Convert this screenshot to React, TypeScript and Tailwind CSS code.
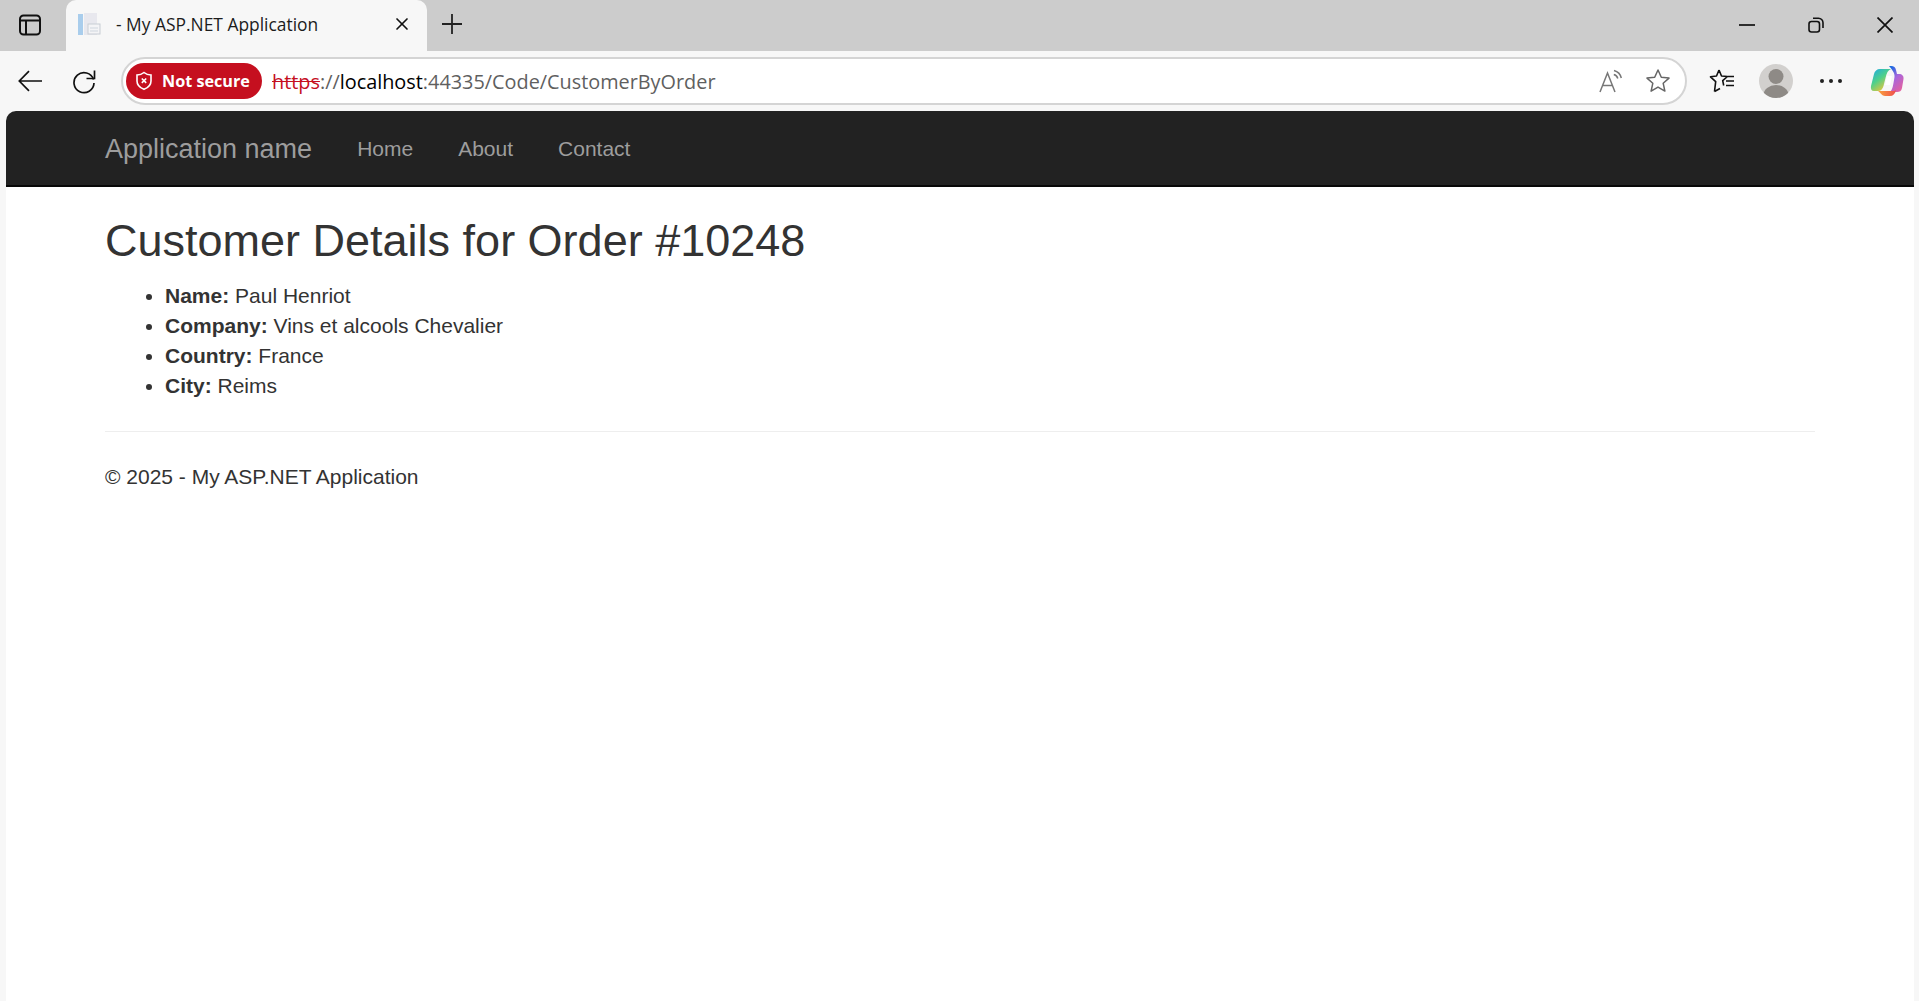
import { X } from 'lucide-react';

const uiFont = "font-['Open_Sans','Noto_Sans',sans-serif]";
const pageFont = "font-['Liberation_Sans',Arial,sans-serif]";

function TabStrip() {
  return (
    <div className="flex h-[51px] items-start bg-[#cccccc]">
      <div className="flex h-[51px] w-[66px] items-center pb-[2px] pl-[19px]">
        <svg width="22" height="22" viewBox="0 0 22 22" fill="none" stroke="#111" strokeWidth="2">
          <rect x="1" y="1.500" width="20" height="19" rx="3.500" />
          <path d="M1 6.500h20M7 6.500v14" />
        </svg>
      </div>
      <div className="flex h-[51px] w-[361px] items-center rounded-t-[10px] bg-[#f7f7f7] pb-[3px] pl-[11px] pr-[15px]">
        <svg width="24" height="24" viewBox="0 0 24 24" className="shrink-0">
          <rect x="1" y="2" width="5" height="21" fill="#a9cdec" />
          <rect x="7" y="1" width="13" height="22" fill="#e8e8ee" />
          <rect x="11" y="12" width="12" height="10" fill="#f4f4f6" stroke="#c8cdd4" />
          <path d="M13 16h8M13 19h8" stroke="#cfd6de" />
        </svg>
        <span className={`ml-[15px] flex-1 text-[17.400px] text-[#1c1c1c] ${uiFont}`}>- My ASP.NET Application</span>
        <X size={20} color="#111" strokeWidth={2} />
      </div>
      <div className="flex h-[51px] w-[50px] items-center justify-center pb-[3px]">
        <svg width="22" height="22" viewBox="0 0 22 22" stroke="#222" strokeWidth="1.800">
          <path d="M11 1v20M1 11h20" />
        </svg>
      </div>
      <div className="flex-1" />
      <div className="flex h-[51px] items-center pb-[2px]">
        <div className="flex w-[69px] justify-center">
          <svg width="16" height="16" viewBox="0 0 16 16" stroke="#111" strokeWidth="1.700">
            <path d="M0 8h16" />
          </svg>
        </div>
        <div className="flex w-[69px] justify-center">
          <svg width="16" height="16" viewBox="0 0 16 16" fill="none" stroke="#111" strokeWidth="1.600">
            <rect x="1" y="4.500" width="10.500" height="10.500" rx="2.500" />
            <path d="M5 1.200h5.500A4.500 4.500 0 0 1 15 5.700V11" />
          </svg>
        </div>
        <div className="flex w-[69px] justify-center">
          <svg width="16" height="16" viewBox="0 0 16 16" stroke="#111" strokeWidth="1.700">
            <path d="M0.500 0.500l15 15M15.500 0.500l-15 15" />
          </svg>
        </div>
      </div>
    </div>
  );
}

function AddressBar() {
  return (
    <div className="flex h-[60px] items-center bg-[#f7f7f7]">
      <div className="flex w-[60px] justify-center">
        <svg width="24" height="22" viewBox="0 0 24 22" fill="none" stroke="#111" strokeWidth="1.700">
          <path d="M24 11H1.500M11 1.200L1.300 11l9.700 9.800" />
        </svg>
      </div>
      <div className="flex w-[48px] justify-center">
        <svg width="26" height="26" viewBox="0 0 26 26" fill="none" stroke="#111" strokeWidth="1.700">
          <path d="M22.500 11.500A10 10 0 1 0 23 15" />
          <path d="M23.500 2.500v8h-8" />
        </svg>
      </div>
      <div className="ml-[13px] flex h-[48px] w-[1566px] items-center rounded-full border-2 border-[#d4d4d4] bg-white pl-[3px] pr-[14px]">
        <div className={`flex h-[36px] w-[136px] items-center rounded-full bg-[#c50f1f] pl-[9px] font-bold text-white ${uiFont}`}>
          <svg width="18" height="20" viewBox="0 0 18 20" fill="none" stroke="#fff" strokeWidth="1.600">
            <path d="M9 1.500c2 1.600 4.400 2.400 7 2.500v6c0 4-3 6.800-7 8.300C5 16.800 2 14 2 10V4c2.600-.1 5-.9 7-2.500z" />
            <path d="M6.800 7.500l4.400 4.400M11.200 7.500l-4.400 4.400" />
          </svg>
          <span className="ml-[9px] text-[16.200px]">Not secure</span>
        </div>
        <div className={`ml-[10px] flex-1 pt-[1px] text-[19.850px] text-[#5f5f5f] ${uiFont}`}>
          <span className="text-[#c50f1f] line-through">https</span>
          <span>://</span>
          <span className="text-black">localhost</span>
          <span>:44335/Code/CustomerByOrder</span>
        </div>
        <svg width="24" height="24" viewBox="0 0 24 24" fill="none" stroke="#777" strokeWidth="1.500" className="mr-[22px]">
          <path d="M1 23L8.500 4 16 23M3.800 16.500h9.400" />
          <path d="M15 1.500c3.800 1 6.400 3.600 7.300 7.500M14.800 5.500c2 .5 3.400 1.900 4 4" />
        </svg>
        <svg width="26" height="26" viewBox="0 0 26 26" fill="none" stroke="#666" strokeWidth="1.500" strokeLinejoin="round">
          <path d="M13 2l3.300 7.300 7.700.8-5.800 5.200 1.700 7.800L13 19.100l-6.900 4 1.700-7.800L2 10.100l7.700-.8z" />
        </svg>
      </div>
      <div className="ml-[17px] flex w-[36px] justify-center">
        <svg width="26" height="26" viewBox="0 0 26 26" fill="none" stroke="#111" strokeWidth="1.600" strokeLinejoin="round">
          <path d="M10 2l2.500 6 6 .5-4.800 4.200 1 4.800M5.500 23.500l1.200-9.800L1.500 8.800 7.500 8 10 2M5.500 23.500l5.500-3" />
          <path d="M19 8.500h6M17 13h8M17 17.500h8" />
        </svg>
      </div>
      <div className="ml-[19px] flex h-[34px] w-[34px] items-end justify-center overflow-hidden rounded-full bg-[#d2d0ce]">
        <svg width="34" height="34" viewBox="0 0 34 34" fill="#8e8a86">
          <circle cx="17" cy="12.500" r="7.500" />
          <ellipse cx="17" cy="31" rx="12.500" ry="10" />
        </svg>
      </div>
      <div className="ml-[21px] flex w-[34px] justify-center gap-[5px]">
        <span className="h-[4px] w-[4px] rounded-full bg-[#222]" />
        <span className="h-[4px] w-[4px] rounded-full bg-[#222]" />
        <span className="h-[4px] w-[4px] rounded-full bg-[#222]" />
      </div>
      <div className="ml-[22px]">
        <svg width="34" height="32" viewBox="0 0 34 32" fill="none">
          <defs>
            <linearGradient id="copA" x1="0" y1="0" x2="0.700" y2="1">
              <stop offset="0" stopColor="#19a8e8" />
              <stop offset="0.5" stopColor="#4fd08a" />
              <stop offset="1" stopColor="#f7c533" />
            </linearGradient>
            <linearGradient id="copB" x1="0.200" y1="0" x2="0.800" y2="1">
              <stop offset="0" stopColor="#1668e0" />
              <stop offset="0.45" stopColor="#a866dd" />
              <stop offset="1" stopColor="#e8609a" />
            </linearGradient>
            <linearGradient id="copC" x1="0" y1="0" x2="1" y2="0">
              <stop offset="0" stopColor="#f9a23c" />
              <stop offset="1" stopColor="#ef4e4e" />
            </linearGradient>
          </defs>
          <path d="M10 4h11c-3 1-4.500 4-5.500 9l-2 8c-.8 3-2.800 5-5.500 5H4c-2.500 0-3.500-2-3-5L4 9c.6-3 3-5 6-5z" fill="url(#copA)" />
          <path d="M19 1h2c3 0 4.500 1.500 5 4l1 4h2c3 0 5 2 4.500 5L32 23c-.6 3-2.500 4-5 4h-8c3-1 3.500-4 4.500-9l1-6c.4-3-1-6-5.500-11z" fill="url(#copB)" />
          <path d="M8 26h11c3 0 5 .5 7-1-1 4-3 6-6 6h-5c-3 0-4-3-7-5z" fill="url(#copC)" />
          <path d="M17 11h5l-2 9h-5z" fill="#fff" />
        </svg>
      </div>
    </div>
  );
}

function Navbar() {
  return (
    <div className={`flex h-[76px] items-center rounded-t-[10px] border-b-2 border-[#080808] bg-[#222222] pl-[99px] pr-[99px] pt-[2px] ${pageFont}`}>
      <span className="text-[27px] text-[#9d9d9d]">Application name</span>
      <div className="ml-[45px] flex gap-[45px] text-[21px] text-[#9d9d9d]">
        <span>Home</span>
        <span>About</span>
        <span>Contact</span>
      </div>
    </div>
  );
}

const details = [
  ['Name:', 'Paul Henriot'],
  ['Company:', 'Vins et alcools Chevalier'],
  ['Country:', 'France'],
  ['City:', 'Reims'],
];

export default function App() {
  return (
    <div className="flex h-[1001px] flex-col overflow-hidden bg-[#f7f7f7]">
      <TabStrip />
      <AddressBar />
      <div className="ml-[6px] mr-[5px] flex flex-1 flex-col rounded-t-[10px] bg-white">
        <Navbar />
        <div className={`px-[99px] text-[21px] leading-[30px] text-[#333333] ${pageFont}`}>
          <h2 className="mt-[29px] text-[45px] leading-[50px] font-normal">Customer Details for Order #10248</h2>
          <ul className="mt-[15px] list-disc pl-[60px]">
            {details.map(([label, value]) => (
              <li key={label}>
                <b>{label}</b> {value}
              </li>
            ))}
          </ul>
          <hr className="mt-[30px] border-t border-[#eeeeee]" />
          <div className="mt-[30px]">© 2025 - My ASP.NET Application</div>
        </div>
      </div>
    </div>
  );
}
